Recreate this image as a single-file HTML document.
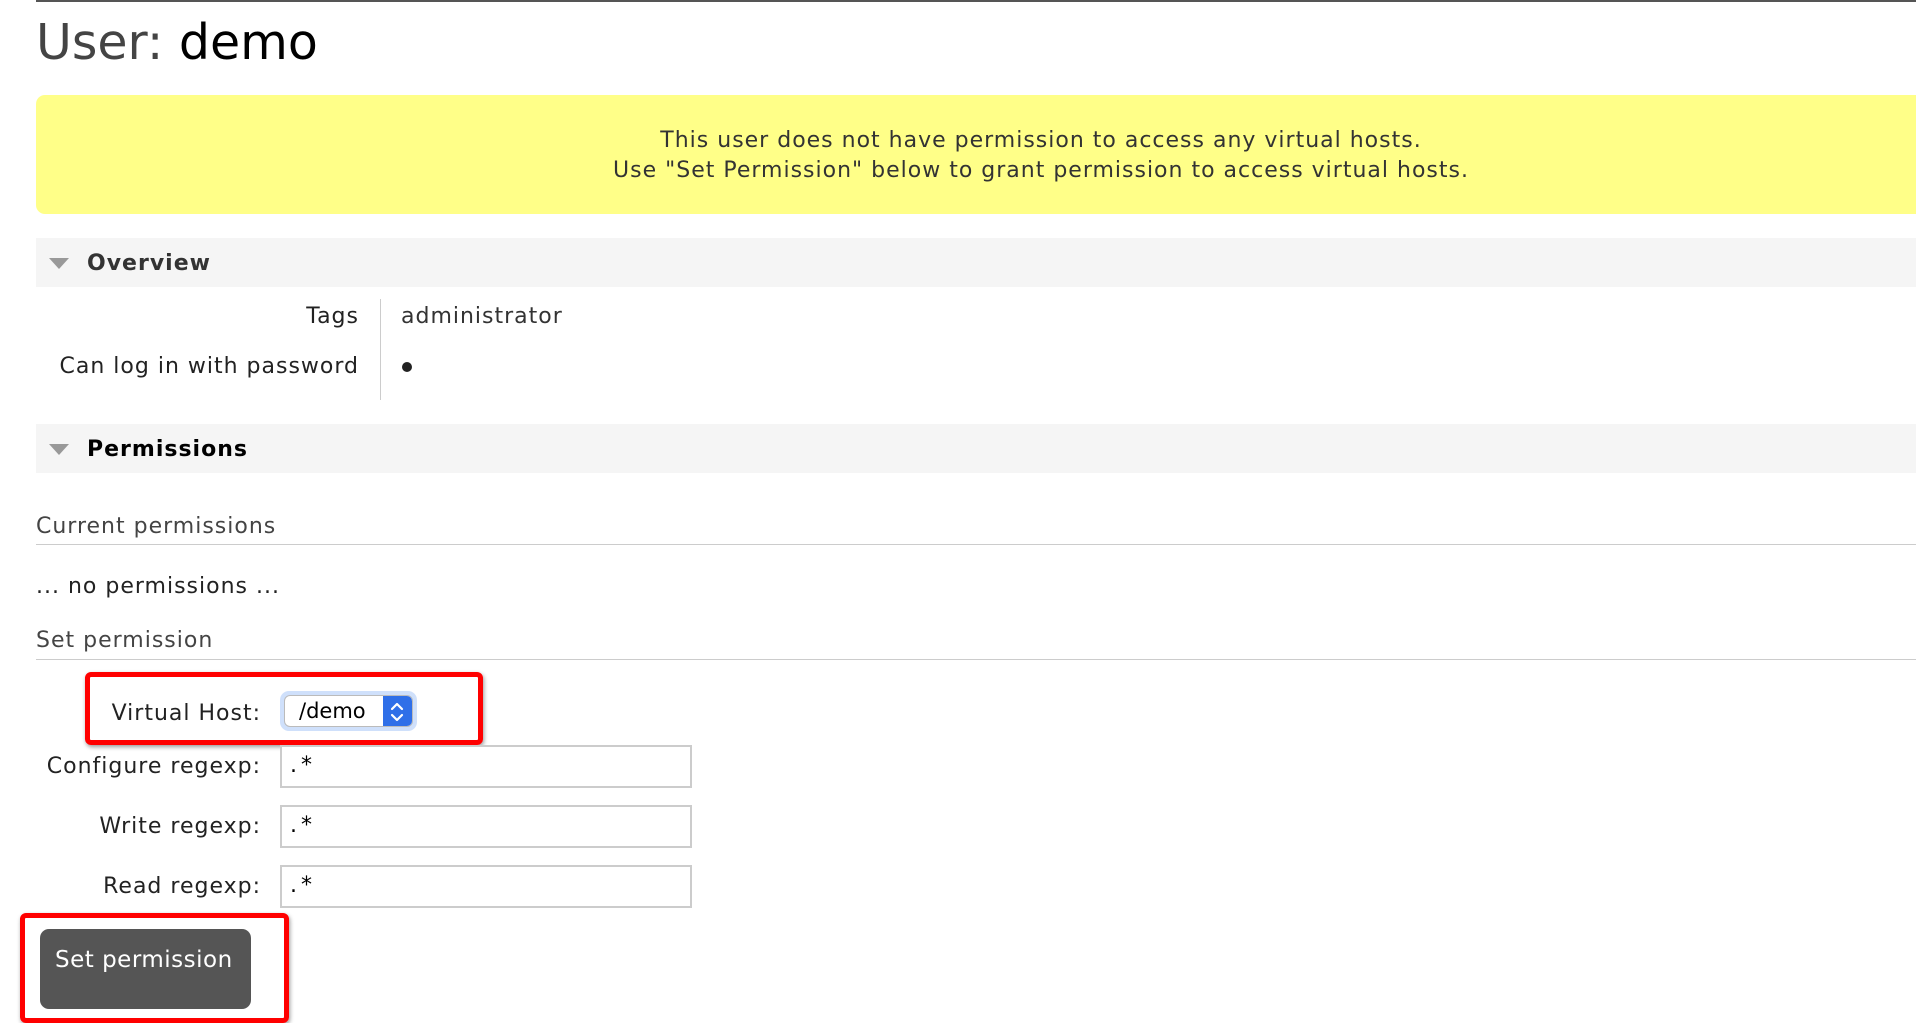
<!DOCTYPE html>
<html><head><meta charset="utf-8"><style>
*{margin:0;padding:0;box-sizing:border-box}
body{width:1916px;height:988px;overflow:hidden;background:#fff;font-family:"DejaVu Sans","Liberation Sans",sans-serif;color:#222;position:relative}
.a{position:absolute;white-space:nowrap}
.topline{left:36px;right:0;top:0;height:2px;background:#555}
h1{position:absolute;left:36px;top:14px;font-weight:normal;font-size:49px;color:#444}
h1 b{font-weight:normal;color:#000}
.warn{left:36px;top:95px;width:1900px;height:119px;background:#ffff88;border-radius:9px;color:#333;font-size:22px;letter-spacing:1px;line-height:30px}
.warn div{position:absolute;left:0;width:2010px;text-align:center}
.bar{left:36px;right:0;height:49px;background:#f5f5f5}
.bar span{position:absolute;left:51px;top:13px;font-weight:bold;font-size:22px;letter-spacing:1px;color:#333}
.tri{position:absolute;left:13px;top:20px;width:0;height:0;border-left:10px solid transparent;border-right:10px solid transparent;border-top:11px solid #999}
.lbl{font-size:22px;letter-spacing:1px;color:#222;text-align:right}
.sub{font-size:22px;letter-spacing:1px;color:#444}
.hr{left:36px;right:0;height:1px;background:#ccc}
.inp{border:2px solid #ccc;background:#fff;height:43px;width:412px;left:280px}
.inp span{position:absolute;left:8px;top:6px;font-size:22px;letter-spacing:4px;color:#000}
.red{border:5px solid #f00;border-radius:6px;box-shadow:1px 2px 4px rgba(0,0,0,.4)}
</style></head><body>
<div class="a topline"></div>
<h1>User: <b>demo</b></h1>
<div class="a warn"><div style="top:31px">This user does not have permission to access any virtual hosts.</div><div style="top:61px">Use "Set Permission" below to grant permission to access virtual hosts.</div></div>

<div class="a bar" style="top:238px"><div class="tri"></div><span>Overview</span></div>
<div class="a lbl" style="right:1557px;top:304px">Tags</div>
<div class="a lbl" style="right:1557px;top:354px">Can log in with password</div>
<div class="a" style="left:380px;top:299px;width:1px;height:101px;background:#ccc"></div>
<div class="a" style="left:401px;top:304px;font-size:22px;letter-spacing:1px;color:#333">administrator</div>
<div class="a" style="left:402px;top:362px;width:10px;height:10px;border-radius:50%;background:#222"></div>

<div class="a bar" style="top:424px"><div class="tri"></div><span style="color:#000">Permissions</span></div>

<div class="a sub" style="left:36px;top:514px">Current permissions</div>
<div class="a hr" style="top:544px"></div>
<div class="a" style="left:36px;top:574px;font-size:22px;letter-spacing:1px;color:#222">... no permissions ...</div>
<div class="a sub" style="left:36px;top:628px">Set permission</div>
<div class="a hr" style="top:659px"></div>

<div class="a red" style="left:85px;top:672px;width:398px;height:73px"></div>
<div class="a lbl" style="right:1655px;top:701px">Virtual Host:</div>
<div class="a" style="left:280px;top:691px;width:137px;height:40px;border-radius:9px;background:#cfe0fb"></div>
<div class="a" style="left:284px;top:695px;width:129px;height:32px;border-radius:6px;background:#fff;border:1px solid #bbb;overflow:hidden">
 <span style="position:absolute;left:14px;top:3px;font-size:21px;color:#000">/demo</span>
 <div style="position:absolute;right:0;top:0;width:29px;height:32px;background:#2f6fe8">
  <svg width="29" height="32" viewBox="0 0 29 32"><path d="M9 13l5-5 5 5M9 19l5 5 5-5" fill="none" stroke="#fff" stroke-width="2.2" stroke-linecap="round" stroke-linejoin="round"/></svg>
 </div>
</div>

<div class="a lbl" style="right:1655px;top:754px">Configure regexp:</div>
<div class="a inp" style="top:745px"><span>.*</span></div>
<div class="a lbl" style="right:1655px;top:814px">Write regexp:</div>
<div class="a inp" style="top:805px"><span>.*</span></div>
<div class="a lbl" style="right:1655px;top:874px">Read regexp:</div>
<div class="a inp" style="top:865px"><span>.*</span></div>

<div class="a red" style="left:20px;top:913px;width:269px;height:110px"></div>
<div class="a" style="left:40px;top:929px;width:211px;height:80px;background:#555;border-radius:9px"><span style="position:absolute;left:15px;top:18px;font-size:23px;letter-spacing:0.5px;color:#fff">Set permission</span></div>
</body></html>
